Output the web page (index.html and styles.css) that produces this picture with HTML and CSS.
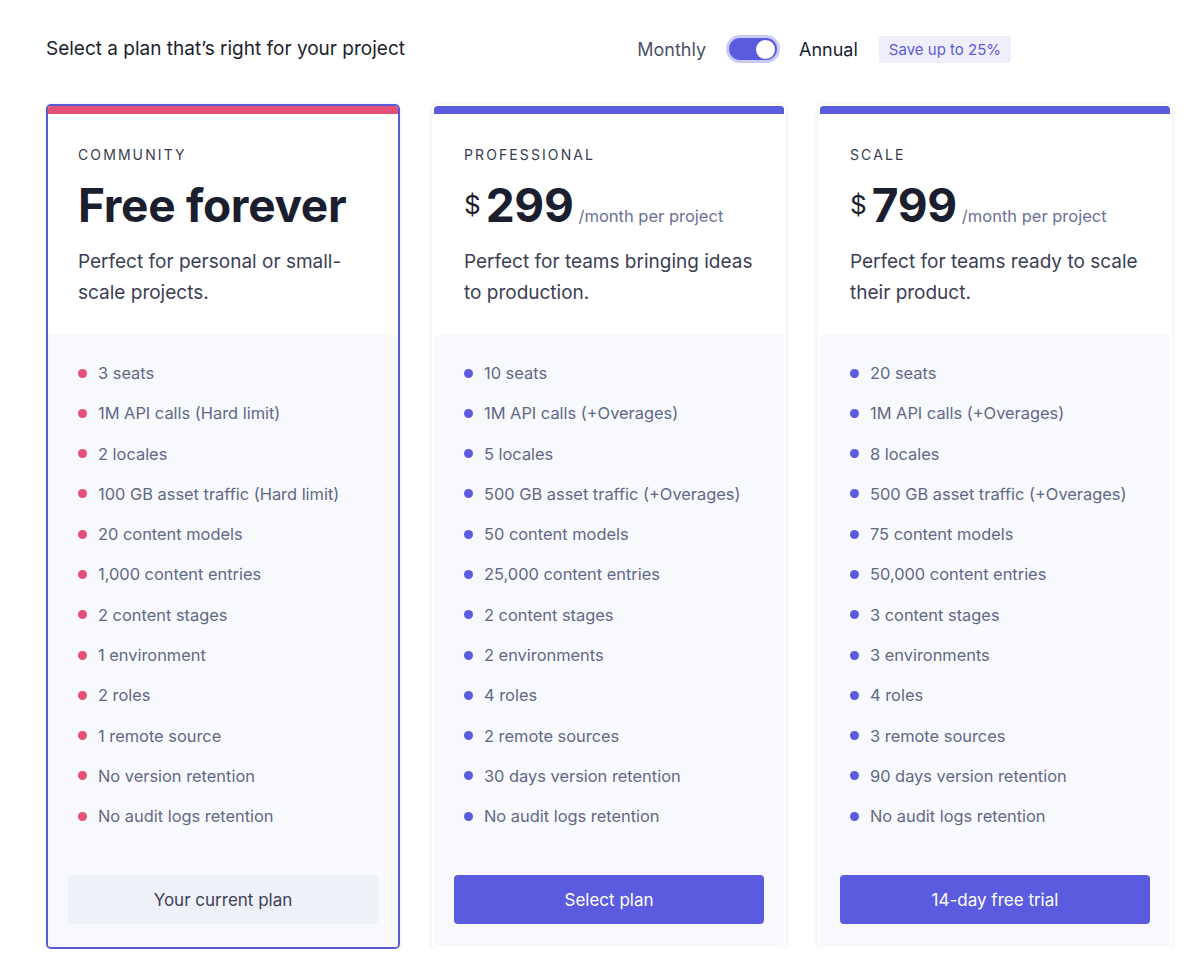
FILE: index.html
```html
<!DOCTYPE html>
<html lang="en">
<head>
<meta charset="utf-8">
<title>Select a plan</title>
<link rel="stylesheet" href="styles.css">
</head>
<body>
<div class="page">
  <header class="top">
    <h1 class="title">Select a plan that’s right for your project</h1>
    <div class="billing">
      <span class="period">Monthly</span>
      <span class="switch"><span class="knob"></span></span>
      <span class="period active">Annual</span>
      <span class="save">Save up to 25%</span>
    </div>
  </header>

  <div class="plans">
    <section class="card current">
      <div class="bar"></div>
      <div class="head">
        <div class="name">COMMUNITY</div>
        <div class="price"><span class="big">Free forever</span></div>
        <p class="desc">Perfect for personal or small-scale projects.</p>
      </div>
      <div class="body">
        <ul class="features">
          <li>3 seats</li>
          <li>1M API calls (Hard limit)</li>
          <li>2 locales</li>
          <li>100 GB asset traffic (Hard limit)</li>
          <li>20 content models</li>
          <li>1,000 content entries</li>
          <li>2 content stages</li>
          <li>1 environment</li>
          <li>2 roles</li>
          <li>1 remote source</li>
          <li>No version retention</li>
          <li>No audit logs retention</li>
        </ul>
        <button class="btn btn-muted">Your current plan</button>
      </div>
    </section>

    <section class="card">
      <div class="bar"></div>
      <div class="head">
        <div class="name">PROFESSIONAL</div>
        <div class="price"><span class="cur">$</span><span class="big">299</span><span class="per">/month per project</span></div>
        <p class="desc">Perfect for teams bringing ideas to production.</p>
      </div>
      <div class="body">
        <ul class="features">
          <li>10 seats</li>
          <li>1M API calls (+Overages)</li>
          <li>5 locales</li>
          <li>500 GB asset traffic (+Overages)</li>
          <li>50 content models</li>
          <li>25,000 content entries</li>
          <li>2 content stages</li>
          <li>2 environments</li>
          <li>4 roles</li>
          <li>2 remote sources</li>
          <li>30 days version retention</li>
          <li>No audit logs retention</li>
        </ul>
        <button class="btn btn-primary">Select plan</button>
      </div>
    </section>

    <section class="card">
      <div class="bar"></div>
      <div class="head">
        <div class="name">SCALE</div>
        <div class="price"><span class="cur">$</span><span class="big">799</span><span class="per">/month per project</span></div>
        <p class="desc">Perfect for teams ready to scale their product.</p>
      </div>
      <div class="body">
        <ul class="features">
          <li>20 seats</li>
          <li>1M API calls (+Overages)</li>
          <li>8 locales</li>
          <li>500 GB asset traffic (+Overages)</li>
          <li>75 content models</li>
          <li>50,000 content entries</li>
          <li>3 content stages</li>
          <li>3 environments</li>
          <li>4 roles</li>
          <li>3 remote sources</li>
          <li>90 days version retention</li>
          <li>No audit logs retention</li>
        </ul>
        <button class="btn btn-primary">14-day free trial</button>
      </div>
    </section>
  </div>
</div>
</body>
</html>
```

FILE: styles.css
```css
* { box-sizing: border-box; }

html, body {
  margin: 0;
  padding: 0;
  background: #ffffff;
  font-family: Inter, "Noto Sans", "Liberation Sans", sans-serif;
  color: #1b1e2e;
}

.page {
  padding: 35px 28px 0 46px;
}

.top {
  display: flex;
  align-items: center;
  height: 28px;
}

.title {
  margin: 0;
  font-size: 19px;
  font-weight: 400;
  line-height: 28px;
  color: #1b1e2e;
}

.billing {
  margin-left: auto;
  margin-right: 161px;
  display: flex;
  align-items: center;
}

.period {
  font-size: 18px;
  color: #4b5169;
}

.period.active {
  color: #1b1e2e;
}

.switch {
  position: relative;
  width: 54px;
  height: 28px;
  margin: 0 19px 0 20px;
  border-radius: 14px;
  background: #5b5be0;
  border: 3px solid #c9caf6;
}

.switch .knob {
  position: absolute;
  top: 1.5px;
  right: 2px;
  width: 19px;
  height: 19px;
  border-radius: 50%;
  background: #ffffff;
}

.save {
  margin-left: 21px;
  height: 27px;
  padding: 0 10px;
  display: flex;
  align-items: center;
  background: #efeffc;
  color: #5b5bd6;
  font-size: 15px;
  border-radius: 2px;
}

.plans {
  margin-top: 41px;
  display: grid;
  grid-template-columns: repeat(3, 354px);
  column-gap: 32px;
  align-items: stretch;
}

.card {
  display: flex;
  flex-direction: column;
  border: 2px solid #ffffff;
  border-radius: 5px;
  background: #ffffff;
  box-shadow: 0 1px 5px rgba(30, 35, 70, 0.11);
  overflow: hidden;
}

.card.current {
  border-color: #5b5bd6;
  box-shadow: 0 1px 4px rgba(30, 35, 70, 0.12);
}

.bar {
  height: 8px;
  background: #5b5be0;
  border-radius: 3px 3px 0 0;
}

.card.current .bar {
  background: #e55079;
  border-radius: 2px 2px 0 0;
}

.head {
  padding: 31px 30px 27px 30px;
  background: #ffffff;
}

.name {
  font-size: 14px;
  line-height: 20px;
  letter-spacing: 2.1px;
  color: #373c4f;
}

.price {
  margin-top: 13px;
  height: 54px;
  line-height: 54px;
  white-space: nowrap;
  color: #1b1e2e;
}

.price .big {
  font-size: 46px;
  font-weight: 700;
  letter-spacing: -0.3px;
}

.price .cur {
  display: inline-block;
  vertical-align: top;
  font-size: 26px;
  line-height: 1;
  margin-top: 14px;
  margin-right: 5px;
}

.price .per {
  font-size: 16.5px;
  color: #6b7195;
  margin-left: 5px;
}

.desc {
  margin: 14px 0 0 0;
  font-size: 19px;
  line-height: 31px;
  color: #3b4055;
}

.body {
  flex: 1;
  background: #f8f9fd;
  padding: 26px 20px 23px 20px;
  display: flex;
  flex-direction: column;
}

.features {
  list-style: none;
  margin: 0;
  padding: 0 0 0 10px;
  display: flex;
  flex-direction: column;
  gap: 16.3px;
}

.features li {
  position: relative;
  padding-left: 20px;
  font-size: 16.4px;
  line-height: 24px;
  color: #616886;
}

.features li::before {
  content: "";
  position: absolute;
  left: 0;
  top: 7.5px;
  width: 9px;
  height: 9px;
  border-radius: 50%;
  background: #5b5be0;
}

.card.current .features li::before {
  background: #e55079;
}

.btn {
  margin-top: 47px;
  height: 49px;
  width: 100%;
  border: 0;
  border-radius: 4px;
  font-family: inherit;
  font-size: 17px;
  font-weight: 400;
  cursor: pointer;
}

.btn-muted {
  background: #eef1f7;
  color: #3c4258;
}

.btn-primary {
  background: #5b5be0;
  color: #ffffff;
}
```
